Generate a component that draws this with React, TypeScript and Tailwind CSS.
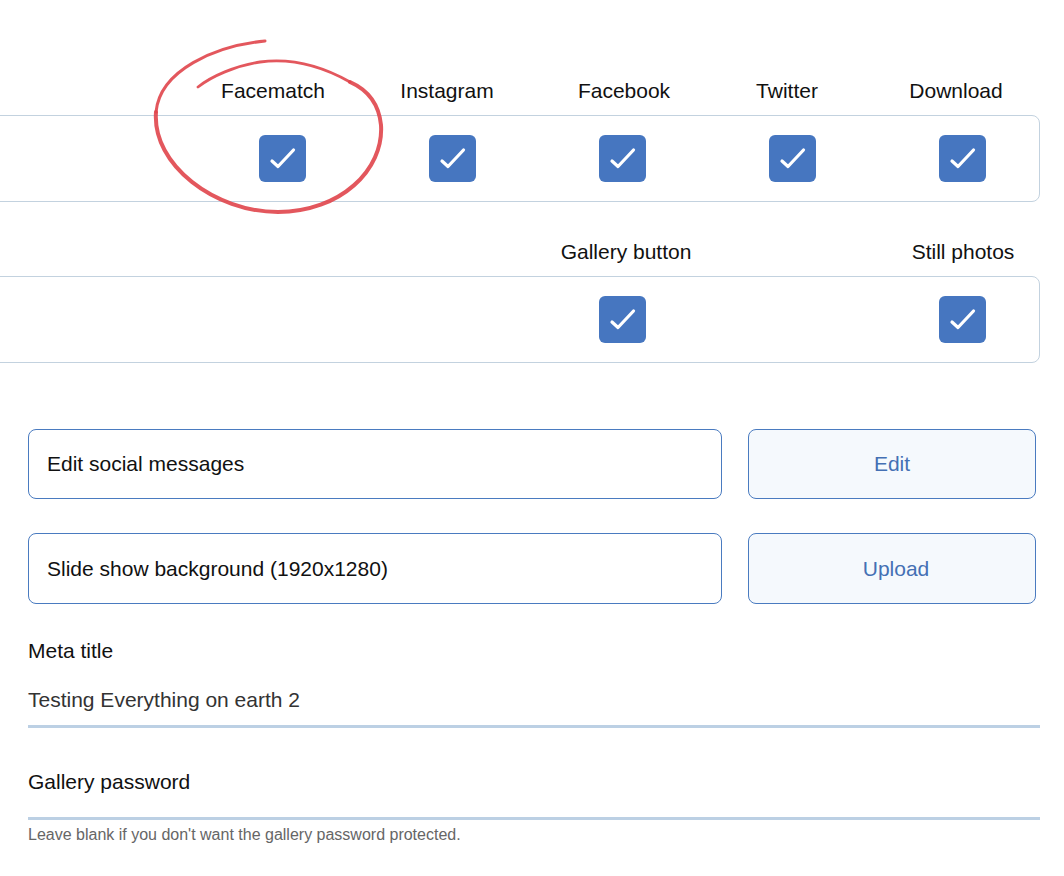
const topItems = [
  { label: "Facematch", shift: "-translate-x-[10px]" },
  { label: "Instagram", shift: "-translate-x-[6px]" },
  { label: "Facebook", shift: "translate-x-[1px]" },
  { label: "Twitter", shift: "-translate-x-[6px]" },
  { label: "Download", shift: "-translate-x-[7px]" },
];
const secondItems = [
  { label: "Gallery button", shift: "translate-x-[3px]" },
  { label: "", shift: "" },
  { label: "Still photos", shift: "" },
];

type Item = { label: string; shift: string };

const CheckBox = () => (
  <div className="h-[47px] w-[47px] rounded-[6px] bg-[#4676c0]">
    <svg width="47" height="47" viewBox="0 0 47 47" fill="none">
      <path d="M13 26 L19 31.5 L34.5 15" stroke="white" strokeWidth="3.2" strokeLinecap="round" strokeLinejoin="round" />
    </svg>
  </div>
);

const OptionPanel = ({ items }: { items: Item[] }) => (
  <div className="-ml-[60px]">
    <div className="mb-[12px] -mr-[8px] flex justify-end">
      {items.map((item, i) => (
        <div key={i} className={`w-[170px] text-center text-[21px] leading-[24px] ${item.shift}`}>
          {item.label}
        </div>
      ))}
    </div>
    <div className="flex h-[87px] items-center justify-end rounded-[8px] border border-[#c3d2df]">
      <div className="-mr-[8px] flex">
        {items.map((item, i) => (
          <div key={i} className="flex w-[170px] justify-center">
            {item.label && <CheckBox />}
          </div>
        ))}
      </div>
    </div>
  </div>
);

const ActionRow = ({ label, action, height, nudge }: { label: string; action: string; height: string; nudge: string }) => (
  <div className={`flex gap-[26px] pr-[4px] ${height}`}>
    <div className="flex flex-1 items-center rounded-[8px] border-[1.5px] border-[#4a7bc0] pl-[18px] text-[21px]">
      {label}
    </div>
    <button className={`w-[288px] rounded-[8px] border-[1.5px] border-[#4a7bc0] bg-[#f5f9fd] text-[21px] text-[#4470b4] ${nudge}`}>
      {action}
    </button>
  </div>
);

export default function App() {
  return (
    <div className="relative min-h-screen overflow-hidden bg-white pt-[79px] pl-[28px] pr-[24px] font-['Liberation_Sans',Arial,sans-serif] text-[#111]">
      <OptionPanel items={topItems} />
      <div className="mt-[38px]">
        <OptionPanel items={secondItems} />
      </div>

      <div className="mt-[66px] flex flex-col gap-[34px]">
        <ActionRow label="Edit social messages" action="Edit" height="h-[70px]" nudge="" />
        <ActionRow label="Slide show background (1920x1280)" action="Upload" height="h-[71px]" nudge="pl-[8px]" />
      </div>

      <div className="mt-[35px]">
        <div className="text-[21px] leading-[24px]">Meta title</div>
        <div className="mt-[25px] border-b-[3px] border-[#bcd0e4] pb-[13px] text-[21px] leading-[24px] text-[#333]">
          Testing Everything on earth 2
        </div>
      </div>

      <div className="mt-[42px]">
        <div className="text-[21px] leading-[24px]">Gallery password</div>
        <div className="mt-[23px] border-b-[3px] border-[#bcd0e4]" />
        <div className="mt-[6px] text-[16px] leading-[18px] text-[#666]">
          Leave blank if you don't want the gallery password protected.
        </div>
      </div>

      {/* hand drawn annotation */}
      <svg className="pointer-events-none absolute left-0 top-0" width="420" height="240" viewBox="0 0 420 240" fill="none">
        <path
          d="M156 112 C152 165 215 212 278 212 C340 212 384 170 381 125 C379 105 368 90 350 82"
          stroke="#e0454b"
          strokeWidth="4"
          strokeLinecap="round"
          opacity="0.9"
        />
        <path
          d="M265 41 C215 46 160 70 156 112"
          stroke="#e0454b"
          strokeWidth="3"
          strokeLinecap="round"
          opacity="0.9"
        />
        <path
          d="M350 82 C320 65 290 58 260 62 C235 66 212 76 198 87"
          stroke="#e0454b"
          strokeWidth="2.8"
          strokeLinecap="round"
          opacity="0.9"
        />
      </svg>
    </div>
  );
}
